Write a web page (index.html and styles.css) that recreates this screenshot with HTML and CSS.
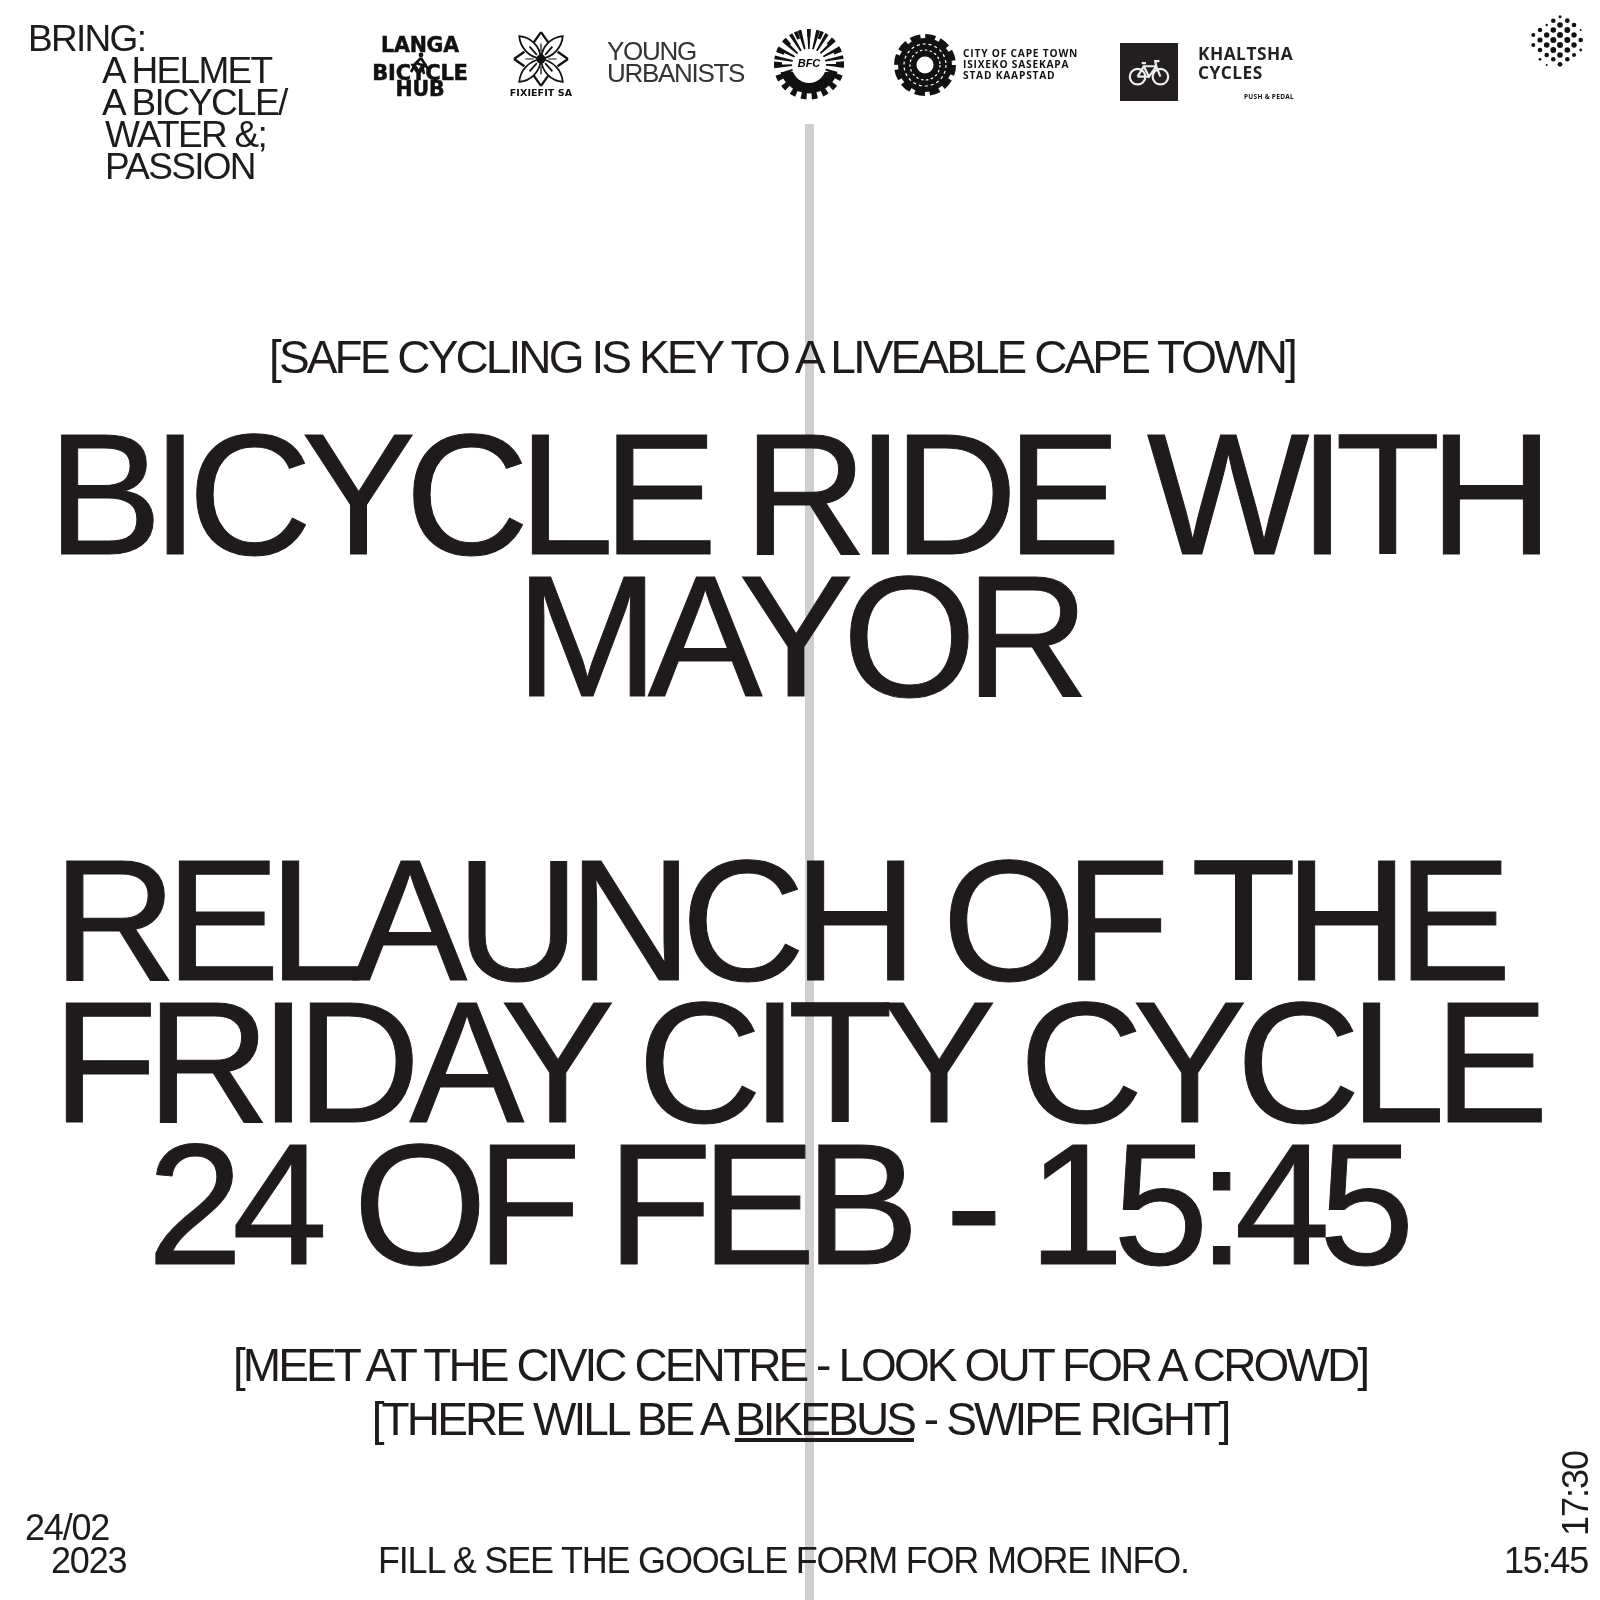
FILE: index.html
```html
<!DOCTYPE html>
<html lang="en">
<head>
    <meta charset="UTF-8">
    <title>Bicycle ride with mayor</title>
    <link rel="stylesheet" href="styles.css">
</head>
<body>
    <div class="poster">
        <div class="spine"></div>

        <!-- top: what to bring + partner logos -->
        <header class="top">
            <div class="bring">
                <div>BRING:</div>
                <div class="in1">A HELMET</div>
                <div class="in1">A BICYCLE/</div>
                <div class="in2">WATER &amp;;</div>
                <div class="in2">PASSION</div>
            </div>

            <div class="logos">
                <div class="logo langa">
                    <span>LANGA</span>
                    <svg class="langa-rider" viewBox="0 0 24 24" width="24" height="24">
                        <circle cx="13" cy="3" r="2.4" fill="#111"/>
                        <path d="M13 6 L8 11 L14 13 L16 22 M13 6 L18 14 L22 20 M8 11 L3 20" fill="none" stroke="#111" stroke-width="2.6"/>
                    </svg>
                    <span class="langa-big">BICYCLE</span>
                    <span>HUB</span>
                </div>

                <div class="logo fixie">
                    <svg viewBox="0 0 54 54" width="56" height="56">
                        <g fill="none" stroke="#111" stroke-width="1.7">
                            <path d="M27 27 C15 25 7 16 6 5 C17 6 26 14 27 27 Z"/>
                            <path d="M27 27 C39 25 47 16 48 5 C37 6 28 14 27 27 Z"/>
                            <path d="M27 27 C15 29 7 38 6 49 C17 48 26 40 27 27 Z"/>
                            <path d="M27 27 C39 29 47 38 48 49 C37 48 28 40 27 27 Z"/>
                            <path d="M27 1 L34 11 M27 1 L20 11 M27 53 L34 43 M27 53 L20 43 M1 27 L11 34 M1 27 L11 20 M53 27 L43 34 M53 27 L43 20" stroke-width="2.2"/>
                            <path d="M16 15 L23 23 M38 15 L31 23 M16 39 L23 31 M38 39 L31 31"/>
                            <path d="M27 12 L27 20 M27 34 L27 42 M12 27 L20 27 M34 27 L42 27" stroke-width="1.2"/>
                        </g>
                        <circle cx="27" cy="27" r="4.5" fill="#111"/>
                    </svg>
                    <span>FIXIEFIT SA</span>
                </div>

                <div class="logo young">YOUNG<br>URBANISTS</div>

                <div class="logo bfc">
                    <svg viewBox="0 0 72 72" width="72" height="72">
                        <defs>
                            <clipPath id="gear-top"><rect x="0" y="0" width="72" height="44"/></clipPath>
                            <clipPath id="gear-low"><rect x="0" y="44" width="72" height="28"/></clipPath>
                        </defs>
                        <g clip-path="url(#gear-low)" fill="none" stroke="#111">
                            <circle cx="36" cy="36" r="32" stroke-width="7" stroke-dasharray="5.5 5"/>
                            <circle cx="36" cy="36" r="23" stroke-width="13"/>
                        </g>
                        <g clip-path="url(#gear-top)" fill="none" stroke="#111">
                            <circle cx="36" cy="36" r="25" stroke-width="20" stroke-dasharray="2.6 4.2"/>
                            <circle cx="36" cy="36" r="31" stroke-width="8" stroke-dasharray="3.4 8.6"/>
                        </g>
                        <circle cx="36" cy="38" r="17" fill="#fff"/>
                        <text class="bfc-text" x="36" y="39" text-anchor="middle">BFC</text>
                    </svg>
                </div>

                <div class="logo city">
                    <svg viewBox="0 0 62 64" width="62" height="64">
                        <circle cx="31" cy="32" r="28" fill="none" stroke="#111" stroke-width="6" stroke-dasharray="10 4.66"/>
                        <circle cx="31" cy="32" r="27" fill="#111"/>
                        <g fill="none" stroke="#fff">
                            <circle cx="31" cy="32" r="21" stroke-width="1.2" stroke-dasharray="3 3"/>
                            <circle cx="31" cy="32" r="15" stroke-width="1.2" stroke-dasharray="2.5 2.5"/>
                        </g>
                        <circle cx="31" cy="32" r="8.5" fill="#fff"/>
                    </svg>
                    <div class="city-text">CITY OF CAPE TOWN<br>ISIXEKO SASEKAPA<br>STAD KAAPSTAD</div>
                </div>

                <div class="logo khaltsha">
                    <div class="k-box">
                        <svg viewBox="0 0 40 26" width="42" height="27">
                            <g fill="none" stroke="#eee" stroke-width="2.1">
                                <circle cx="9" cy="17" r="7.5"/>
                                <circle cx="31" cy="17" r="7.5"/>
                                <path d="M9 17 L15 7 L27 7 L31 17 M15 7 L20 17 L27 7 M9 17 L20 17 M13 4 L17 4 M27 7 L26 2 L30 2"/>
                            </g>
                        </svg>
                    </div>
                    <div class="k-text">
                        <div class="k-name">KHALTSHA<br>CYCLES</div>
                        <div class="k-sub">PUSH &amp; PEDAL</div>
                    </div>
                </div>
            </div>

            <svg class="sphere" viewBox="0 0 60 60" width="60" height="60">
                <g fill="#111">
                    <circle cx="8.3" cy="25" r="2"/><circle cx="8.3" cy="35" r="2"/>
                    <circle cx="15" cy="20" r="2.2"/><circle cx="15" cy="30" r="2.6"/><circle cx="15" cy="40" r="2.3"/><circle cx="15" cy="49.3" r="1.4"/>
                    <circle cx="21.7" cy="15" r="1.2"/><circle cx="21.7" cy="25" r="2.7"/><circle cx="21.7" cy="35" r="2.8"/><circle cx="21.7" cy="45" r="2.3"/><circle cx="21.7" cy="55" r="1"/>
                    <circle cx="28.3" cy="10.7" r="2.3"/><circle cx="28.3" cy="20" r="2.8"/><circle cx="28.3" cy="30" r="3"/><circle cx="28.3" cy="40" r="2.9"/><circle cx="28.3" cy="49.3" r="2.3"/>
                    <circle cx="35" cy="6.7" r="1.5"/><circle cx="35" cy="15" r="2.8"/><circle cx="35" cy="25" r="3"/><circle cx="35" cy="35" r="3"/><circle cx="35" cy="45" r="2.8"/><circle cx="35" cy="54.3" r="2.4"/>
                    <circle cx="42.3" cy="10.7" r="2.4"/><circle cx="42.3" cy="20" r="2.9"/><circle cx="42.3" cy="30" r="3"/><circle cx="42.3" cy="40" r="2.8"/><circle cx="42.3" cy="49.3" r="2.3"/>
                    <circle cx="49" cy="15" r="2.3"/><circle cx="49" cy="25" r="2.7"/><circle cx="49" cy="35" r="2.7"/><circle cx="49" cy="45" r="2"/>
                    <circle cx="55.7" cy="20" r="1"/><circle cx="55.7" cy="30" r="2.3"/><circle cx="55.7" cy="40" r="1.4"/>
                </g>
            </svg>
        </header>

        <main class="middle">
            <p class="note tagline">[SAFE CYCLING IS KEY TO A LIVEABLE CAPE TOWN]</p>
            <h1 class="title">
                <span class="ln1">BICYCLE RIDE WITH</span>
                <span class="ln2">MAYOR</span>
                <br>
                <span class="ln3">RELAUNCH OF THE</span>
                <span class="ln4">FRIDAY CITY CYCLE</span>
                <span class="ln5">24 OF FEB - 15:45</span>
            </h1>
            <p class="note meet">[MEET AT THE CIVIC CENTRE - LOOK OUT FOR A CROWD]<br>[THERE WILL BE A <u>BIKEBUS</u> - SWIPE RIGHT]</p>
        </main>

        <footer class="bottom">
            <div class="date">24/02<br><span class="year">2023</span></div>
            <div class="form">FILL &amp; SEE THE GOOGLE FORM FOR MORE INFO.</div>
            <div class="times">
                <div class="end">17:30</div>
                <div class="start">15:45</div>
            </div>
        </footer>
    </div>
</body>
</html>
```

FILE: styles.css
```css
*{
    box-sizing: border-box;
}
body{
    margin: 0;
    background-color: #fff;
}
.poster{
    position: relative;
    width: 1600px;
    height: 1600px;
    overflow: hidden;
    display: flex;
    flex-direction: column;
    background-color: #fff;
    color: #1f1b1c;
    font-family: "Liberation Sans", Arial, sans-serif;
    filter: blur(0.4px);
}
/* grey line behind the text */
.spine{
    position: absolute;
    left: 805px;
    top: 124px;
    bottom: 0;
    width: 9px;
    background-color: #cfcfcf;
}

/* top row */
.top{
    position: relative;
    height: 330px;
    display: flex;
    align-items: flex-start;
}
.bring{
    width: 370px;
    padding: 23px 0 0 28px;
    font-size: 37px;
    line-height: 32.1px;
    letter-spacing: -1.7px;
}
.in1{
    padding-left: 74px;
}
.in2{
    padding-left: 77px;
}
.logos{
    display: flex;
    align-items: flex-start;
    color: #111;
}
.langa{
    display: flex;
    flex-direction: column;
    align-items: center;
    width: 100px;
    margin-top: 37px;
    font-family: "DejaVu Sans", sans-serif;
    font-weight: bold;
    font-size: 20.5px;
    line-height: 16.5px;
    letter-spacing: -0.2px;
    -webkit-text-stroke: 0.5px #111;
}
.langa-rider{
    margin: -2px 0 -11px;
}
.langa-big{
    font-size: 21px;
}
.fixie{
    display: flex;
    flex-direction: column;
    align-items: center;
    margin: 31px 0 0 39px;
    width: 64px;
    font-family: "DejaVu Sans", sans-serif;
    font-weight: bold;
    font-size: 9.5px;
    letter-spacing: 0.1px;
    white-space: nowrap;
}
.young{
    margin: 41px 0 0 34px;
    width: 166px;
    font-size: 26px;
    line-height: 21.5px;
    letter-spacing: -1.3px;
    color: #333;
}
.bfc svg{
    display: block;
    margin-top: 28px;
}
.city{
    display: flex;
    align-items: center;
    margin: 33px 0 0 49px;
}
.city-text{
    margin: -2px 0 0 7px;
    width: 158px;
    font-family: "Open Sans", sans-serif;
    font-weight: 700;
    font-size: 10.2px;
    line-height: 11px;
    letter-spacing: 0.8px;
}
.bfc-text{
    font-family: "Liberation Sans", sans-serif;
    font-style: italic;
    font-weight: bold;
    font-size: 11px;
}
.khaltsha{
    display: flex;
    margin: 43px 0 0 -1px;
}
.k-box{
    display: flex;
    align-items: center;
    justify-content: center;
    width: 58px;
    height: 58px;
    background-color: #231f20;
}
.k-text{
    margin-left: 20px;
    width: 96px;
    padding-top: 1px;
}
.k-name{
    font-family: "Open Sans", sans-serif;
    font-weight: 700;
    font-size: 17.3px;
    line-height: 19px;
    letter-spacing: 0.5px;
    color: #222;
}
.k-sub{
    margin-top: 10px;
    text-align: right;
    font-family: "Open Sans", sans-serif;
    font-weight: 700;
    font-size: 6.5px;
    letter-spacing: 0.3px;
    white-space: nowrap;
}
.sphere{
    position: absolute;
    left: 1525px;
    top: 10px;
}

/* centre block */
.middle{
    flex: 1;
    position: relative;
    text-align: center;
}
.note{
    margin: 0;
    font-size: 46px;
    line-height: 54px;
    letter-spacing: -2.9px;
}
.tagline{
    padding-right: 36px;
}
.title{
    margin: 39px 0 0;
    font-size: 172px;
    font-weight: normal;
    line-height: 142px;
    letter-spacing: -11px;
    -webkit-text-stroke: 1px #1f1b1c;
}
/* the lines don't share one centre on the poster */
.title span{
    display: block;
}
.ln1{
    padding-right: 10px;
}
.ln2{
    padding-right: 6px;
}
.ln3{
    padding-right: 47px;
    letter-spacing: -11.6px;
}
.ln4{
    padding-right: 10px;
}
.ln5{
    padding-right: 49px;
}
.meet{
    margin-top: 63px;
}

/* bottom row */
.bottom{
    position: relative;
    height: 100px;
    display: flex;
    align-items: flex-end;
    padding: 0 12px 23px 25px;
    font-size: 36px;
    line-height: 33px;
    letter-spacing: -1.2px;
}
.date{
    width: 353px;
}
.year{
    padding-left: 26px;
}
.form{
    flex: 1;
}
.times{
    display: flex;
    flex-direction: column;
    align-items: flex-end;
}
.end{
    writing-mode: vertical-rl;
    transform: rotate(180deg);
    margin: 0 -4px 8px 0;
    letter-spacing: -1px;
}
```
